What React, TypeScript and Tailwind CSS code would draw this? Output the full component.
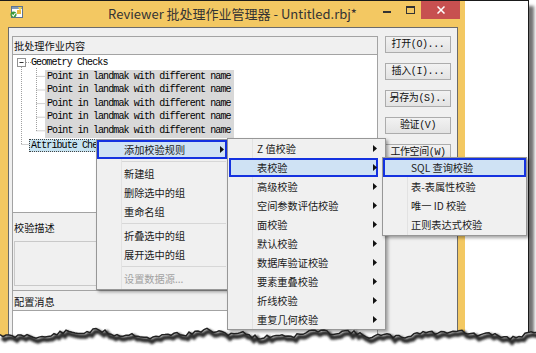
import React from 'react';

const CJK = "font-['Noto_Sans_CJK_SC','Noto_Sans',sans-serif]";
const MONO = "font-['Liberation_Mono','Noto_Sans_CJK_SC',monospace]";

function Arrow() {
  return (
    <svg width="4" height="7" viewBox="0 0 4 7" className="shrink-0">
      <path d="M0 0 L4 3.5 L0 7 Z" fill="#111" />
    </svg>
  );
}

type ItemProps = {
  label: string;
  arrow?: boolean;
  hot?: boolean;
  disabled?: boolean;
  pad: string;
  hotBox?: string;
};

function MenuItem({ label, arrow, hot, disabled, pad, hotBox = 'left-0 right-0' }: ItemProps) {
  return (
    <div className={`relative flex h-[19px] items-center ${pad}`}>
      {hot && <div className={`absolute top-0 bottom-0 border-2 border-[#1432e0] bg-[#cfe2f4] ${hotBox}`} />}
      <span className={`relative flex-1 whitespace-pre ${disabled ? 'text-[#a2a2a2]' : 'text-[#1b1b1b]'}`}>{label}</span>
      {arrow && (
        <span className="relative">
          <Arrow />
        </span>
      )}
    </div>
  );
}

function Sep() {
  return (
    <div className="flex h-[5px] items-center pl-[25px] pr-[1px]">
      <div className="h-px w-full bg-[#d7d7d7]" />
    </div>
  );
}

function AppIcon() {
  return (
    <svg width="14" height="14" viewBox="0 0 14 14">
      <rect x="2.5" y="1.5" width="11" height="11" fill="#fff" stroke="#5d7390" />
      <rect x="3" y="2" width="10" height="2" fill="#7f98b8" />
      <path d="M8 5 L12 5 L12 9 L8 9 Z" fill="#e9b83a" />
      <path d="M9 2 L13 2 L11 6 Z" fill="#f3d24d" />
      <circle cx="4.5" cy="9.5" r="3" fill="#3a9a3a" />
      <path d="M3 9.5 L4.3 11 L6.5 8" stroke="#fff" strokeWidth="1.1" fill="none" />
    </svg>
  );
}

function TreeLines() {
  const kids = [21.4, 35, 48.6, 62.2, 75.8];
  return (
    <svg className="pointer-events-none absolute inset-0" width="364" height="156">
      <g stroke="#a0a0a0" strokeDasharray="1 1" fill="none">
        <line x1="8.5" y1="12" x2="8.5" y2="89.5" />
        <line x1="8.5" y1="89.5" x2="16" y2="89.5" />
        <line x1="13" y1="7.5" x2="18" y2="7.5" />
        <line x1="23.5" y1="13" x2="23.5" y2="76" />
        {kids.map((y) => (
          <line key={y} x1="23.5" y1={y} x2="32" y2={y} />
        ))}
      </g>
      <rect x="4.5" y="3.5" width="8" height="8" fill="#fff" stroke="#919191" />
      <line x1="6.5" y1="7.5" x2="10.5" y2="7.5" stroke="#333" />
    </svg>
  );
}

function Tree() {
  const kid = 'Point in landmak with different name';
  return (
    <div className={`relative flex-1 border-t border-[#a3a3a3] bg-white pt-px ${MONO} text-[10px] tracking-[-0.9px] text-black`}>
      <TreeLines />
      <div className="h-[13.6px] pl-[18px] leading-[13.6px]">Geometry Checks</div>
      {[0, 1, 2, 3, 4].map((i) => (
        <div key={i} className="ml-[32px] h-[13.6px] w-[189px] bg-[#d8d8d8] pl-[2px] leading-[13.6px]">
          {kid}
        </div>
      ))}
      <div className="h-[13.6px] pl-[16px]">
        <div className="inline-block h-[13px] border border-dotted border-[#444] bg-[#c6e3f1] px-[1px] leading-[11px]">
          Attribute Checks
        </div>
      </div>
    </div>
  );
}

function Btn({ label }: { label: string }) {
  return (
    <div className={`flex h-[17px] items-center justify-center border border-[#acacac] bg-gradient-to-b from-[#f2f2f2] to-[#e3e3e3] ${MONO} text-[10px] tracking-[-0.4px] text-[#111]`}>
      {label}
    </div>
  );
}

function Window() {
  return (
    <div className="flex w-[465px] flex-col bg-[#f3c862]">
      <div className="grid h-[26px] grid-cols-[100px_1fr_100px]">
        <div className="pl-[9px] pt-[4px]">
          <AppIcon />
        </div>
        <div className={`text-center text-[13px] leading-[26px] text-[#333] ${CJK}`}>
          Reviewer 批处理作业管理器 - Untitled.rbj*
        </div>
        <div className="flex justify-end pr-[5px]">
          <div className="mr-[15px] mt-[10px] h-[2px] w-[8px] bg-[#333]" />
          <div className="mr-[6px] mt-[5px] h-[8px] w-[9px] border border-t-2 border-[#333]" />
          <div className="flex h-[18px] w-[39px] items-center justify-center bg-[#c75050]">
            <svg width="8" height="8" viewBox="0 0 8 8">
              <path d="M0.5 0.5 L7.5 7.5 M7.5 0.5 L0.5 7.5" stroke="#fff" strokeWidth="1.5" />
            </svg>
          </div>
        </div>
      </div>
      <div className={`ml-[8px] mr-[7px] flex flex-1 gap-[7px] border-x border-t border-[#6b6b6b] bg-[#f0f0f0] pl-[3px] pr-[6px] pt-[8px] ${CJK} text-[10.2px] text-[#111]`}>
        <div className="flex w-[366px] flex-col">
          <div className="flex h-[177px] flex-col border border-[#a3a3a3]">
            <div className="flex h-[17px] items-center pl-px">批处理作业内容</div>
            <Tree />
          </div>
          <div className="flex h-[78px] flex-col border-x border-b border-[#a3a3a3]">
            <div className="flex h-[28px] items-center pl-px pt-[2px]">校验描述</div>
            <div className="mx-px h-[45px] border border-[#c9c9c9] bg-[#f0f0f0]" />
          </div>
          <div className="flex flex-1 flex-col border-x border-[#a3a3a3]">
            <div className="flex h-[19px] items-center pl-px pt-[2px]">配置消息</div>
            <div className="flex-1 border-t border-[#a3a3a3] bg-white" />
          </div>
        </div>
        <div className="flex w-[66px] flex-col gap-[10px]">
          <Btn label="打开(O)..." />
          <Btn label="插入(I)..." />
          <Btn label="另存为(S).." />
          <Btn label="验证(V)" />
          <Btn label="工作空间(W)" />
        </div>
      </div>
    </div>
  );
}

function Torn() {
  let s = 11;
  const rnd = () => {
    s = (s * 9301 + 49297) % 233280;
    return s / 233280;
  };
  const pts: string[] = [];
  for (let x = 0; x <= 540; x += 3) {
    const y = 16 + Math.sin(x / 19) * 2.6 + Math.sin(x / 5.7) * 1.3 + (rnd() - 0.5) * 4;
    pts.push(`${x},${y.toFixed(1)}`);
  }
  const line = `M${pts.join(' L')}`;
  return (
    <svg className="pointer-events-none absolute left-0 top-[318px]" width="536" height="35" viewBox="0 0 536 35">
      <defs>
        <filter id="blur" x="-5%" y="-50%" width="110%" height="200%">
          <feGaussianBlur stdDeviation="1.3" />
        </filter>
      </defs>
      <path d={`${line} L540,35 L0,35 Z`} fill="#fff" />
      <path d={line} transform="translate(2,3)" stroke="#2e2e2e" strokeWidth="4.5" fill="none" filter="url(#blur)" />
      <path d={line} stroke="#222" strokeWidth="1.5" fill="none" />
    </svg>
  );
}

export default function App() {
  return (
    <div className={`relative h-[353px] w-[536px] overflow-hidden bg-white ${CJK}`}>
      <div className="flex h-full w-[529px] border-r border-t border-[#1a1a1a] shadow-[5px_6px_3px_rgba(0,0,0,0.55)]">
        <Window />
        <div className="flex-1 bg-white" />
      </div>

      <div className="absolute left-[96px] top-[139px] w-[132px] border border-[#979797] bg-[#f0f0f0] text-[10.2px] shadow-[2px_2px_3px_rgba(0,0,0,0.35)]">
        <div className="absolute bottom-0 left-[24px] top-0 w-px bg-[#e2e2e2]" />
        <MenuItem label="添加校验规则" arrow hot pad="pl-[27px] pr-[3px]" />
        <Sep />
        <MenuItem label="新建组" pad="pl-[27px]" />
        <MenuItem label="删除选中的组" pad="pl-[27px]" />
        <MenuItem label="重命名组" pad="pl-[27px]" />
        <Sep />
        <MenuItem label="折叠选中的组" pad="pl-[27px]" />
        <MenuItem label="展开选中的组" pad="pl-[27px]" />
        <Sep />
        <MenuItem label="设置数据源..." disabled pad="pl-[27px]" />
        <div className="h-[1px]" />
      </div>

      <div className="absolute left-[227px] top-[138px] w-[159px] border border-[#979797] bg-[#f0f0f0] text-[10.2px] shadow-[2px_2px_3px_rgba(0,0,0,0.35)]">
        <div className="absolute bottom-0 left-[24px] top-0 w-px bg-[#e2e2e2]" />
        <MenuItem label="Z 值校验" arrow pad="pl-[29px] pr-[8px]" />
        <MenuItem label="表校验" arrow hot hotBox="left-px right-[7px]" pad="pl-[29px] pr-[8px]" />
        <MenuItem label="高级校验" arrow pad="pl-[29px] pr-[8px]" />
        <MenuItem label="空间参数评估校验" arrow pad="pl-[29px] pr-[8px]" />
        <MenuItem label="面校验" arrow pad="pl-[29px] pr-[8px]" />
        <MenuItem label="默认校验" arrow pad="pl-[29px] pr-[8px]" />
        <MenuItem label="数据库验证校验" arrow pad="pl-[29px] pr-[8px]" />
        <MenuItem label="要素重叠校验" arrow pad="pl-[29px] pr-[8px]" />
        <MenuItem label="折线校验" arrow pad="pl-[29px] pr-[8px]" />
        <MenuItem label="重复几何校验" arrow pad="pl-[29px] pr-[8px]" />
      </div>

      <div className="absolute left-[382px] top-[157px] w-[145px] border border-[#979797] bg-[#f0f0f0] text-[10.2px] shadow-[2px_2px_3px_rgba(0,0,0,0.35)]">
        <div className="absolute bottom-0 left-[24px] top-0 w-px bg-[#e2e2e2]" />
        <MenuItem label="SQL 查询校验" hot hotBox="left-0 right-0" pad="pl-[28px]" />
        <MenuItem label="表-表属性校验" pad="pl-[28px]" />
        <MenuItem label="唯一 ID 校验" pad="pl-[28px]" />
        <MenuItem label="正则表达式校验" pad="pl-[28px]" />
        <div className="h-[1px]" />
      </div>

      <Torn />
    </div>
  );
}
